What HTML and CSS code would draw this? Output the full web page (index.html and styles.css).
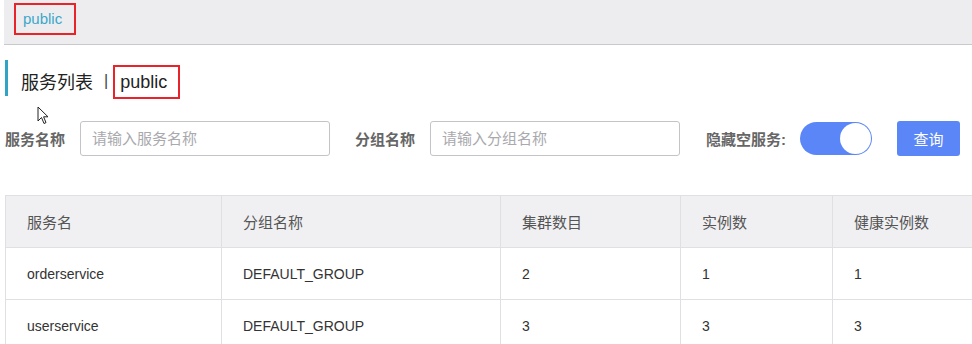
FILE: index.html
```html
<!DOCTYPE html>
<html lang="zh-CN">
<head>
    <meta charset="UTF-8" />
    <title>服务列表</title>
    <link rel="stylesheet" href="styles.css">
</head>
<body>
    <div class="topbar">
        <span class="ns-tag marked">public</span>
    </div>

    <div class="page">
        <div class="title">
            <span>服务列表</span>
            <span class="sep">|</span>
            <span class="title-ns marked">public</span>
        </div>

        <div class="filters">
            <label class="label">服务名称</label>
            <input class="field" type="text" placeholder="请输入服务名称">
            <label class="label label-group">分组名称</label>
            <input class="field" type="text" placeholder="请输入分组名称">
            <label class="label label-hide">隐藏空服务:</label>
            <span class="switch"><span class="knob"></span></span>
            <button class="btn">查询</button>
        </div>

        <div class="table-wrap">
            <table class="service-table">
                <colgroup>
                    <col style="width: 216px">
                    <col style="width: 279px">
                    <col style="width: 180px">
                    <col style="width: 152px">
                    <col>
                </colgroup>
                <thead>
                    <tr>
                        <th>服务名</th>
                        <th>分组名称</th>
                        <th>集群数目</th>
                        <th>实例数</th>
                        <th>健康实例数</th>
                    </tr>
                </thead>
                <tbody>
                    <tr>
                        <td>orderservice</td>
                        <td>DEFAULT_GROUP</td>
                        <td>2</td>
                        <td>1</td>
                        <td>1</td>
                    </tr>
                    <tr>
                        <td>userservice</td>
                        <td>DEFAULT_GROUP</td>
                        <td>3</td>
                        <td>3</td>
                        <td>3</td>
                    </tr>
                </tbody>
            </table>
        </div>
    </div>

    <svg class="cursor" width="12" height="19" viewBox="0 0 12 19">
        <path d="M1 1 L1 15 L4.5 11.5 L7 17.5 L9 16.6 L6.6 10.8 L11 10.8 Z" fill="#fff" stroke="#222" stroke-width="1" stroke-linejoin="round"/>
    </svg>
</body>
</html>
```

FILE: styles.css
```css
html, body {
    margin: 0;
    padding: 0;
    width: 972px;
    height: 344px;
    overflow: hidden;
    background: #fff;
}

body {
    font-family: "Liberation Sans", "Noto Sans CJK SC", sans-serif;
    font-size: 14px;
    color: #333;
    position: relative;
}

.topbar {
    margin-left: 4px;
    height: 44px;
    background: #ededf0;
    border-bottom: 1px solid #c9c9cd;
    display: flex;
    align-items: center;
    padding-left: 10px;
}

.marked {
    outline: 2px solid #e8242a;
    outline-offset: -2px;
}

.ns-tag {
    color: #3ba7c9;
    font-size: 15px;
    height: 32px;
    width: 62px;
    box-sizing: border-box;
    padding-left: 9px;
    line-height: 32px;
    margin-top: -6px;
}

.page {
    padding-left: 5px;
}

.title {
    margin-top: 15px;
    height: 36px;
    border-left: 3px solid #31a3c4;
    display: flex;
    align-items: center;
    padding-left: 13px;
    padding-top: 6px;
    box-sizing: border-box;
    font-size: 18px;
    color: #222;
}

.sep {
    margin: 0 5px 0 11px;
    font-size: 16px;
    color: #444;
}

.title-ns {
    height: 34px;
    line-height: 34px;
    padding: 0 13px 0 7px;
    margin-top: 2px;
}

.filters {
    display: flex;
    align-items: center;
    margin-top: 25px;
    height: 35px;
}

.label {
    font-weight: bold;
    color: #666;
    font-size: 15px;
}

.label-group {
    margin-left: 25px;
}

.label-hide {
    margin-left: 26px;
}

.field {
    width: 250px;
    height: 35px;
    box-sizing: border-box;
    margin-left: 15px;
    border: 1px solid #c4c4c8;
    border-radius: 3px;
    padding: 0 11px;
    font-family: inherit;
    font-size: 15px;
    outline: none;
}

.field::placeholder {
    color: #a9a9ae;
}

.switch {
    margin-left: 14px;
    width: 72px;
    height: 33px;
    border-radius: 17px;
    background: #5b86f8;
    box-sizing: border-box;
    display: flex;
    justify-content: flex-end;
    align-items: center;
    padding-right: 1px;
}

.knob {
    width: 31px;
    height: 31px;
    border-radius: 50%;
    background: #fff;
}

.btn {
    margin-left: 25px;
    width: 63px;
    height: 35px;
    border: none;
    border-radius: 3px;
    background: #5b86f8;
    color: #fff;
    font-family: inherit;
    font-size: 15px;
}

.table-wrap {
    margin-top: 39px;
}

.service-table {
    width: 1120px;
    border-collapse: collapse;
    table-layout: fixed;
}

.service-table th,
.service-table td {
    height: 51px;
    padding: 0 0 0 21px;
    text-align: left;
    border: 1px solid #dfdfe4;
    font-weight: normal;
}

.service-table th {
    background: #f0f0f3;
    color: #555;
    font-size: 15px;
}

.service-table td {
    color: #333;
}

.cursor {
    position: absolute;
    left: 37px;
    top: 106px;
}
```
